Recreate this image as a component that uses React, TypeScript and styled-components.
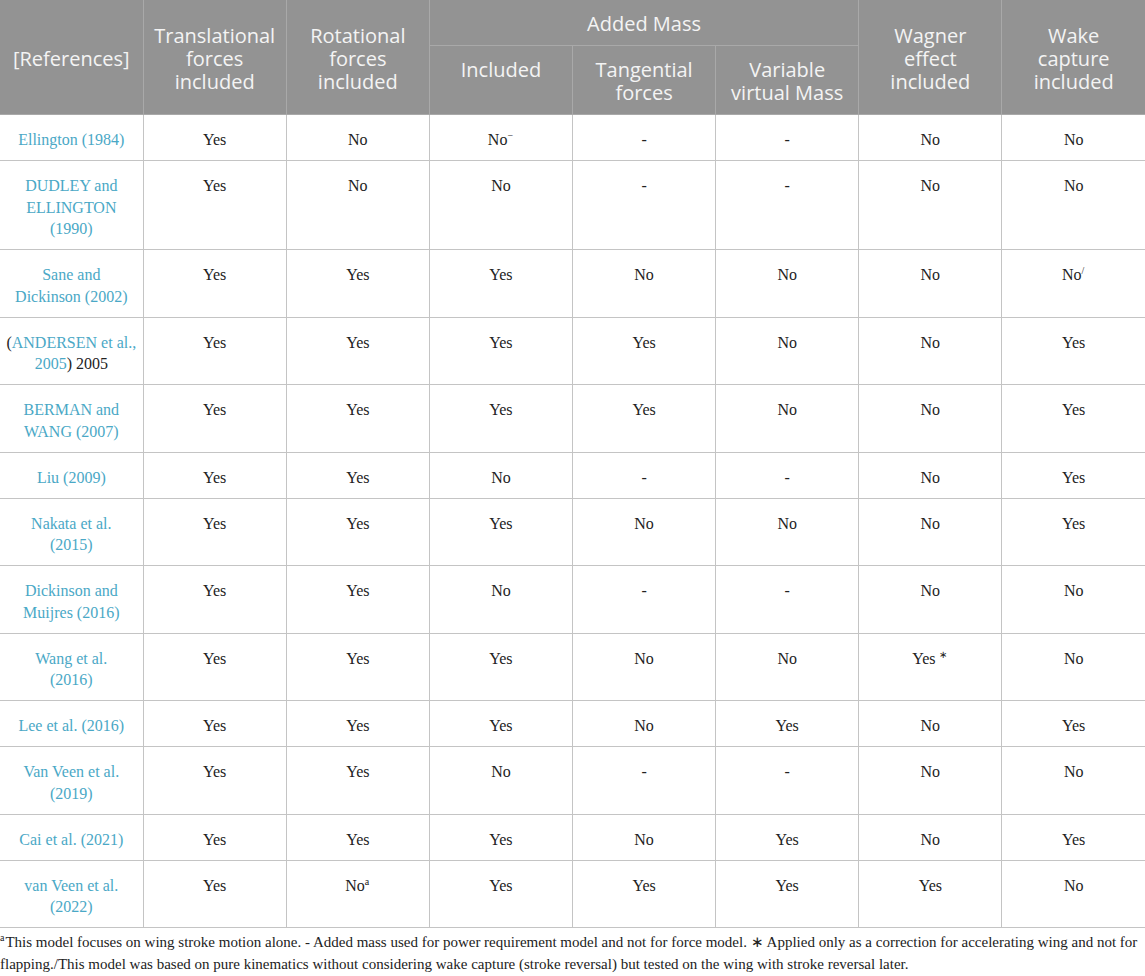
import React from "react";
import styled, { createGlobalStyle } from "styled-components";

const Global = createGlobalStyle`
  html, body { margin: 0; padding: 0; background: #ffffff; }
  body { width: 1145px; }
`;

const Page = styled.div`
  width: 1145px;
  background: #ffffff;
`;

const Table = styled.table`
  width: 1145px;
  table-layout: fixed;
  border-collapse: collapse;
  border-spacing: 0;
`;

const HeadCell = styled.th<{ $middle?: boolean }>`
  background: #939393;
  color: #f4f4f4;
  font-family: "Open Sans", "Noto Sans", sans-serif;
  font-weight: 400;
  font-size: 20px;
  line-height: 23px;
  text-align: center;
  vertical-align: ${(p) => (p.$middle ? "middle" : "top")};
  padding: 12px 4px 10px;
  border: 1px solid #a9a9a9;
  border-top: none;
  &:first-child { border-left: none; }
  &:last-child { border-right: none; }
`;

const Row = styled.tr``;

const Cell = styled.td`
  font-family: "Liberation Serif", "Times New Roman", serif;
  font-size: 16px;
  line-height: 21.5px;
  color: #222222;
  text-align: center;
  vertical-align: top;
  padding: 14px 4px 9.5px;
  border: 1px solid #c4c4c4;
  &:first-child { border-left: none; }
  &:last-child { border-right: none; }
`;

const Ref = styled.span`
  color: #4aa8c6;
`;

const Sup = styled.sup`
  font-size: 10px;
  line-height: 0;
  vertical-align: 0;
  position: relative;
  top: -0.6em;
  margin-right: 1px;
`;

const Footnote = styled.p`
  margin: 3px 0 0;
  font-family: "Liberation Serif", "Times New Roman", serif;
  font-size: 15px;
  line-height: 22px;
  color: #222222;
`;

type Val = React.ReactNode;

const rows: { ref: React.ReactNode; vals: Val[] }[] = [
  { ref: <Ref>Ellington (1984)</Ref>, vals: ["Yes", "No", <>No<Sup>−</Sup></>, "-", "-", "No", "No"] },
  { ref: <Ref>DUDLEY and<br />ELLINGTON<br />(1990)</Ref>, vals: ["Yes", "No", "No", "-", "-", "No", "No"] },
  { ref: <Ref>Sane and<br />Dickinson (2002)</Ref>, vals: ["Yes", "Yes", "Yes", "No", "No", "No", <>No<Sup>/</Sup></>] },
  {
    ref: (
      <>
        (<Ref>ANDERSEN et al.,<br />2005</Ref>) 2005
      </>
    ),
    vals: ["Yes", "Yes", "Yes", "Yes", "No", "No", "Yes"],
  },
  { ref: <Ref>BERMAN and<br />WANG (2007)</Ref>, vals: ["Yes", "Yes", "Yes", "Yes", "No", "No", "Yes"] },
  { ref: <Ref>Liu (2009)</Ref>, vals: ["Yes", "Yes", "No", "-", "-", "No", "Yes"] },
  { ref: <Ref>Nakata et al.<br />(2015)</Ref>, vals: ["Yes", "Yes", "Yes", "No", "No", "No", "Yes"] },
  { ref: <Ref>Dickinson and<br />Muijres (2016)</Ref>, vals: ["Yes", "Yes", "No", "-", "-", "No", "No"] },
  { ref: <Ref>Wang et al.<br />(2016)</Ref>, vals: ["Yes", "Yes", "Yes", "No", "No", <>Yes <Sup>∗</Sup></>, "No"] },
  { ref: <Ref>Lee et al. (2016)</Ref>, vals: ["Yes", "Yes", "Yes", "No", "Yes", "No", "Yes"] },
  { ref: <Ref>Van Veen et al.<br />(2019)</Ref>, vals: ["Yes", "Yes", "No", "-", "-", "No", "No"] },
  { ref: <Ref>Cai et al. (2021)</Ref>, vals: ["Yes", "Yes", "Yes", "No", "Yes", "No", "Yes"] },
  { ref: <Ref>van Veen et al.<br />(2022)</Ref>, vals: ["Yes", <>No<Sup>a</Sup></>, "Yes", "Yes", "Yes", "Yes", "No"] },
];

export default function App() {
  return (
    <Page>
      <Global />
      <Table>
        <colgroup>
          {Array.from({ length: 8 }).map((_, i) => (
            <col key={i} style={{ width: `${1145 / 8}px` }} />
          ))}
        </colgroup>
        <thead>
          <Row>
            <HeadCell rowSpan={2} $middle>[References]</HeadCell>
            <HeadCell rowSpan={2} $middle>Translational<br />forces<br />included</HeadCell>
            <HeadCell rowSpan={2} $middle>Rotational<br />forces<br />included</HeadCell>
            <HeadCell colSpan={3} $middle>Added Mass</HeadCell>
            <HeadCell rowSpan={2} $middle>Wagner<br />effect<br />included</HeadCell>
            <HeadCell rowSpan={2} $middle>Wake<br />capture<br />included</HeadCell>
          </Row>
          <Row>
            <HeadCell>Included</HeadCell>
            <HeadCell>Tangential<br />forces</HeadCell>
            <HeadCell>Variable<br />virtual Mass</HeadCell>
          </Row>
        </thead>
        <tbody>
          {rows.map((r, i) => (
            <Row key={i}>
              <Cell>{r.ref}</Cell>
              {r.vals.map((v, j) => (
                <Cell key={j}>{v}</Cell>
              ))}
            </Row>
          ))}
        </tbody>
      </Table>
      <Footnote>
        <Sup>a</Sup>This model focuses on wing stroke motion alone. - Added mass used for power requirement model and not for force model. ∗ Applied only as a correction for accelerating wing and not for flapping./This model was based on pure kinematics without considering wake capture (stroke reversal) but tested on the wing with stroke reversal later.
      </Footnote>
    </Page>
  );
}
